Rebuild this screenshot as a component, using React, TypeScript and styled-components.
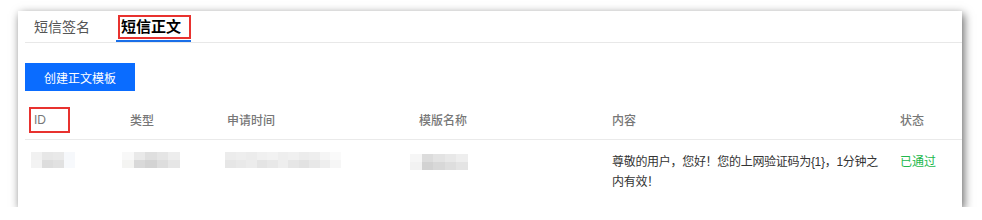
import * as React from 'react';
import styled, { createGlobalStyle } from 'styled-components';

const GlobalStyle = createGlobalStyle`
    html, body {
        margin: 0;
        padding: 0;
        background: #fff;
    }
    body {
        font-family: "Liberation Sans", "Noto Sans CJK SC", sans-serif;
    }
`;

const ID_TILES = [
    ['#f1f1f1', '#e7e7e7', '#e9e9e9', '#f6f8fb'],
    ['#f3f3f3', '#dddddd', '#e1e1e1', '#f7f9fc'],
];
const TYPE_TILES = [
    ['#f8f8f8', '#e9e9e9', '#dfdfdf', '#e5e5e5', '#ededed'],
    ['#f4f4f2', '#d9d9d9', '#d3d3d3', '#dddddd', '#e6e6e6'],
];
const TIME_TILES = [
    ['#ececec', '#eeeeee', '#ececec', '#f0f0f0', '#f2f2f2', '#eeeeee', '#f0f0f0', '#ececec', '#eeeeee', '#f5f5f5', '#fafafa'],
    ['#e6e6e6', '#e9e9e9', '#ececec', '#e4e4e4', '#e8e8e8', '#eeeeee', '#e6e6e6', '#e2e2e2', '#e8e8e8', '#eeeeee', '#f6f6f6'],
];
const NAME_TILES = [
    ['#f6f6f6', '#dcdcdc', '#e3e3e3', '#e8e8e8', '#eeeeee'],
    ['#f2f2f2', '#d2d2d2', '#d8d8d8', '#dedede', '#e4e4e4'],
];

class App extends React.Component {
    renderMosaic(tiles: string[][], width: number, offset: number, top: number) {
        return <Mosaic $cols={tiles[0].length} $width={width} $offset={offset} $top={top}>
            {tiles.map((row, r) => row.map((c, i) => <Tile key={r + '-' + i} $c={c} />))}
        </Mosaic>;
    }

    render() {
        return <>
            <GlobalStyle />
            <Card lang="zh-CN">
                <TabBar>
                    <Tab>短信签名</Tab>
                    <Tab $active>
                        <Marked>短信正文</Marked>
                    </Tab>
                </TabBar>
                <CreateButton>创建正文模板</CreateButton>
                <Table>
                    <HeadRow>
                        <HeadCell><IdMark>ID</IdMark></HeadCell>
                        <HeadCell>类型</HeadCell>
                        <HeadCell>申请时间</HeadCell>
                        <HeadCell>模版名称</HeadCell>
                        <HeadCell>内容</HeadCell>
                        <HeadCell>状态</HeadCell>
                    </HeadRow>
                    <BodyRow>
                        <Cell>{this.renderMosaic(ID_TILES, 44, -3, 0)}</Cell>
                        <Cell>{this.renderMosaic(TYPE_TILES, 58, -8, 0)}</Cell>
                        <Cell>{this.renderMosaic(TIME_TILES, 116, -2, 0)}</Cell>
                        <Cell>{this.renderMosaic(NAME_TILES, 58, -9, 2)}</Cell>
                        <Content>尊敬的用户，您好！您的上网验证码为{'{1}'}，1分钟之内有效！</Content>
                        <Cell><Status>已通过</Status></Cell>
                    </BodyRow>
                </Table>
            </Card>
        </>;
    }
}

const Card = styled.div`
    margin: 11px 0 0 18px;
    width: 944px;
    height: 196px;
    overflow: hidden;
    background: #fff;
    box-shadow: 2px 3px 9px rgba(0, 0, 0, 0.6);
    padding: 0 0 0 7px;
    box-sizing: border-box;
    font-family: "Liberation Sans", "Noto Sans CJK SC", sans-serif;
`;

const TabBar = styled.div`
    display: flex;
    align-items: flex-end;
    height: 31px;
    border-bottom: 1px solid #e8e8e8;
    padding-left: 2px;
`;

const Tab = styled.div<{ $active?: boolean }>`
    display: flex;
    align-items: center;
    flex-shrink: 0;
    white-space: nowrap;
    height: 27px;
    box-sizing: border-box;
    padding: ${p => p.$active ? '0 0 1px 2px' : '0 7px 3px'};
    margin-right: 19px;
    min-width: ${p => p.$active ? '73px' : '0'};
    font-size: ${p => p.$active ? '15px' : '14px'};
    font-weight: ${p => p.$active ? 'bold' : 'normal'};
    color: ${p => p.$active ? '#000' : '#555'};
    border-bottom: 2px solid ${p => p.$active ? '#1a6fe8' : 'transparent'};
`;

const Marked = styled.span`
    display: flex;
    align-items: center;
    white-space: nowrap;
    height: 24px;
    box-sizing: border-box;
    border: 2px solid #e8322f;
    padding: 0 8px 0 1px;
    line-height: 20px;
`;

const CreateButton = styled.button`
    display: block;
    margin-top: 20px;
    width: 110px;
    height: 28px;
    border: none;
    background: #0a6cff;
    color: #fff;
    font-size: 12px;
    font-family: "Liberation Sans", "Noto Sans CJK SC", sans-serif;
    padding: 0;
`;

const Table = styled.div`
    margin-top: 9px;
`;

const COLUMNS = '96px 97px 192px 193px 288px 1fr';

const HeadRow = styled.div`
    display: grid;
    grid-template-columns: ${COLUMNS};
    height: 39px;
    align-items: center;
    border-bottom: 1px solid #eaeaea;
`;

const HeadCell = styled.div`
    padding-left: 9px;
    font-size: 12px;
    font-weight: 500;
    color: #777;
`;

const IdMark = styled.span`
    display: flex;
    align-items: center;
    width: 41px;
    height: 26px;
    margin-left: -5px;
    padding-left: 3px;
    box-sizing: border-box;
    border: 2px solid #e8322f;
`;

const BodyRow = styled.div`
    display: grid;
    grid-template-columns: ${COLUMNS};
    padding-top: 12px;
    align-items: start;
`;

const Cell = styled.div`
    padding: 0 9px;
    font-size: 12px;
    line-height: 20px;
    color: #333;
`;

const Content = styled(Cell)`
    padding-right: 2px;
    letter-spacing: -0.3px;
`;

const Mosaic = styled.div<{ $cols: number; $width: number; $offset: number; $top: number }>`
    display: grid;
    grid-template-columns: repeat(${p => p.$cols}, 1fr);
    grid-template-rows: 8px 8px;
    width: ${p => p.$width}px;
    margin-left: ${p => p.$offset}px;
    margin-top: ${p => p.$top}px;
    filter: blur(0.6px);
`;

const Tile = styled.div<{ $c: string }>`
    background: ${p => p.$c};
`;

const Status = styled.span`
    color: #21b84c;
`;

export default App;
